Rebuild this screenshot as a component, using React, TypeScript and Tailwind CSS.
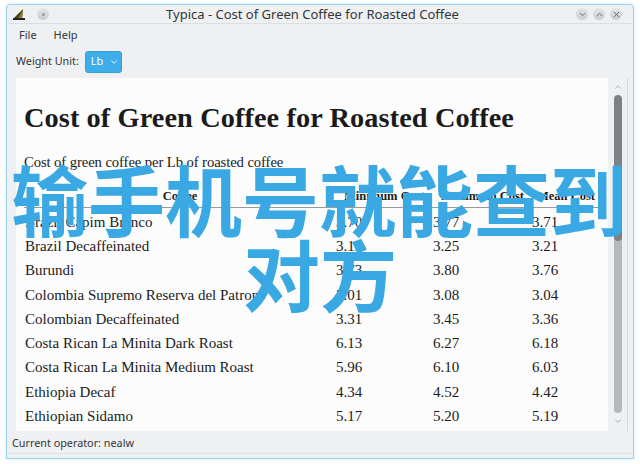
import { ChevronDown, ChevronUp, X } from "lucide-react";

type Row = {
  coffee: string;
  min: string;
  max: string;
  mean: string;
};

const rows: Row[] = [
  { coffee: "Brazil Capim Branco", min: "3.70", max: "3.77", mean: "3.71" },
  { coffee: "Brazil Decaffeinated", min: "3.19", max: "3.25", mean: "3.21" },
  { coffee: "Burundi", min: "3.73", max: "3.80", mean: "3.76" },
  { coffee: "Colombia Supremo Reserva del Patron", min: "3.01", max: "3.08", mean: "3.04" },
  { coffee: "Colombian Decaffeinated", min: "3.31", max: "3.45", mean: "3.36" },
  { coffee: "Costa Rican La Minita Dark Roast", min: "6.13", max: "6.27", mean: "6.18" },
  { coffee: "Costa Rican La Minita Medium Roast", min: "5.96", max: "6.10", mean: "6.03" },
  { coffee: "Ethiopia Decaf", min: "4.34", max: "4.52", mean: "4.42" },
  { coffee: "Ethiopian Sidamo", min: "5.17", max: "5.20", mean: "5.19" },
];

const ui = "font-['Noto_Sans','Liberation_Sans',sans-serif]";
const serif = "font-['Liberation_Serif','DejaVu_Serif',serif]";
const cols = "grid grid-cols-[312px_97px_99px_68px]";

function TypicaLogo() {
  return (
    <svg width="14" height="13" viewBox="0 0 14 13">
      <path d="M11 1 L2 10 L10 10 Z" fill="#3b3a1c" />
      <path d="M11 1 L6 10 L10 10 Z" fill="#8a7a1e" />
      <rect x="1" y="10" width="12" height="2" fill="#222" />
    </svg>
  );
}

function TitleButton({ children }: { children?: React.ReactNode }) {
  return (
    <div className="flex h-[12px] w-[12px] items-center justify-center rounded-full bg-gradient-to-b from-[#e4e5e6] to-[#c9cbcd] text-[#5d6165]">
      {children}
    </div>
  );
}

export default function App() {
  return (
    <div className={`relative h-[464px] w-[640px] overflow-hidden bg-white px-[6px] pt-[4px] ${ui}`}>
      <div className="flex h-[455px] flex-col rounded-t-[4px] border border-[#9fd2ef] bg-[#eff0f1] shadow-[0_0_3px_#bfe3f6]">
        {/* title bar */}
        <div className="relative flex h-[19px] shrink-0 items-center border-b border-[#dcdee0] px-[5px]">
          <div className="flex items-center gap-[11px]">
            <TypicaLogo />
            <TitleButton>
              <div className="h-[3px] w-[3px] rounded-full bg-[#9a9ea2]" />
            </TitleButton>
          </div>
          <div className="flex-1 text-center text-[13px] leading-none text-[#31363b]">
            Typica - Cost of Green Coffee for Roasted Coffee
          </div>
          <div className="flex items-center gap-[5px] pr-[6px]">
            <TitleButton>
              <ChevronDown size={9} strokeWidth={2.5} />
            </TitleButton>
            <TitleButton>
              <ChevronUp size={9} strokeWidth={2.5} />
            </TitleButton>
            <TitleButton>
              <X size={9} strokeWidth={2.5} />
            </TitleButton>
          </div>
        </div>

        {/* menu */}
        <div className="flex h-[22px] shrink-0 items-center gap-[17px] px-[12px] text-[11px] text-[#31363b]">
          <span>File</span>
          <span>Help</span>
        </div>

        {/* toolbar */}
        <div className="flex h-[32px] shrink-0 items-center gap-[6px] px-[9px] pb-[1px] text-[10.8px] text-[#31363b]">
          <span>Weight Unit:</span>
          <div className="flex h-[22px] w-[37px] items-center gap-[6px] rounded-[3px] border border-[#3a9fd6] bg-[#3daee9] pl-[5px] text-white">
            <span>Lb</span>
            <ChevronDown size={10} strokeWidth={2} />
          </div>
        </div>

        {/* content */}
        <div className="ml-[9px] mr-[5px] flex h-[353px] shrink-0 border-r border-[#d6d8da]">
          <div className={`min-w-0 flex-1 bg-[#fcfcfc] pl-[8px] pt-[25px] text-[#1b1b1b] ${serif}`}>
            <h1 className="text-[28.3px] font-bold leading-[30px] tracking-[0.1px]">
              Cost of Green Coffee for Roasted Coffee
            </h1>
            <p className="mt-[20px] text-[14.7px] leading-[18px] tracking-[-0.1px]">
              Cost of green coffee per Lb of roasted coffee
            </p>
            <div className={`${cols} mt-[17px] w-[576px] border-b border-[#9a9a9a] pb-[2px] text-[12.5px] font-bold leading-[17px]`}>
              <span className="text-center">Coffee</span>
              <span className="text-center">Minimum Cost</span>
              <span className="text-center">Maximum Cost</span>
              <span className="text-center">Mean Cost</span>
            </div>
            <div className="pt-[2px] text-[15px]">
              {rows.map((row) => (
                <div key={row.coffee} className={`${cols} h-[24.25px] items-center`}>
                  <span className="pl-[1px]">{row.coffee}</span>
                  <span>{row.min}</span>
                  <span>{row.max}</span>
                  <span>{row.mean}</span>
                </div>
              ))}
            </div>
          </div>

          {/* scrollbar */}
          <div className="flex w-[19px] shrink-0 flex-col items-center bg-[#eff0f1] pt-[4px] text-[#7f8386]">
            <ChevronUp size={10} strokeWidth={1.5} />
            <div className="mt-[3px] flex h-[318px] w-[8px] flex-col overflow-hidden rounded-full bg-[#b6b8ba]">
              <div className="h-[146px] w-full rounded-full bg-[#7f8285]" />
            </div>
            <ChevronDown size={10} strokeWidth={1.5} className="mt-[3px]" />
          </div>
        </div>

        {/* status bar */}
        <div className="flex h-[23px] items-center border-b border-[#dfe1e3] px-[5px] pt-[2px] text-[10.8px] text-[#31363b]">
          Current operator: nealw
        </div>
      </div>

      {/* watermark overlay */}
      <div className="pointer-events-none absolute left-0 top-[160px] w-[640px] whitespace-nowrap font-['Noto_Sans_CJK_SC','Noto_Sans',sans-serif] text-[77px] font-semibold leading-[75px] text-[#3aa8e3]">
        <div className="pl-[11px]">输手机号就能查到</div>
        <div className="text-center">对方</div>
      </div>
    </div>
  );
}
